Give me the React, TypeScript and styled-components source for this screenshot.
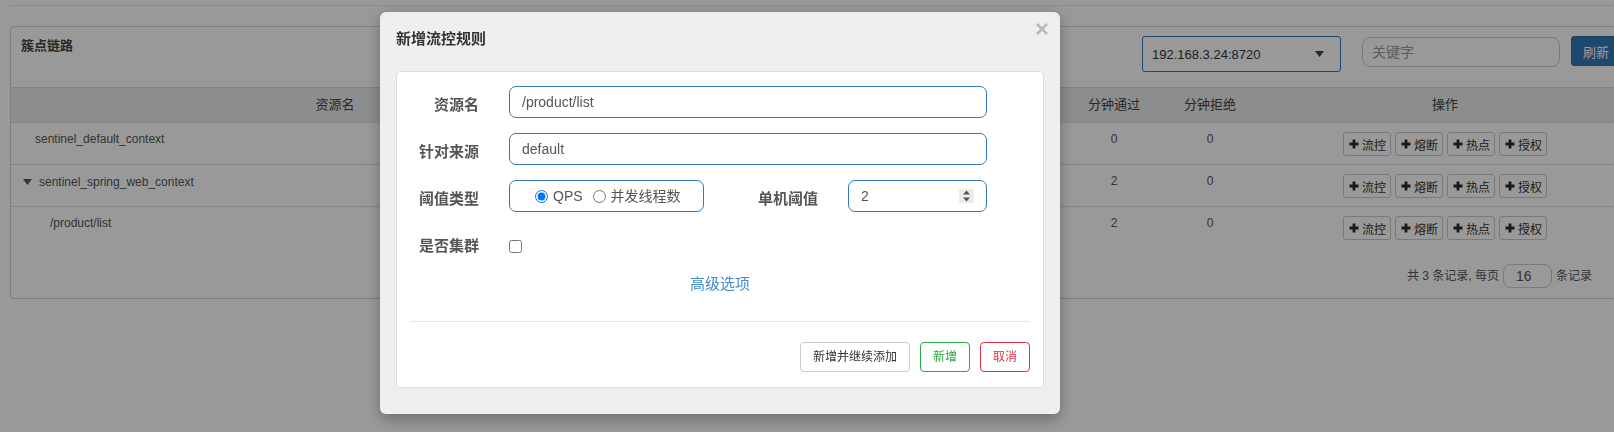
import React from "react";
import styled, { createGlobalStyle } from "styled-components";

const FONT = `"Liberation Sans", "Noto Sans CJK SC", Arial, sans-serif`;

const GlobalStyle = createGlobalStyle`
  html, body { margin: 0; padding: 0; background: #fff; overflow: hidden; }
  body { font-family: ${FONT}; color: #555; font-size: 12px; }
  * { box-sizing: border-box; }
  input[type=number]::-webkit-inner-spin-button,
  input[type=number]::-webkit-outer-spin-button { -webkit-appearance: none; margin: 0; }
`;

const Page = styled.div`
  width: 1614px;
  height: 432px;
  overflow: hidden;
`;

const TopRule = styled.div`
  margin-left: 10px;
  height: 6px;
  border-bottom: 1px solid #e4e4e4;
`;

const Panel = styled.section`
  margin: 20px 0 0 10px;
  width: 1622px;
  border: 1px solid #d4d4d4;
  border-radius: 4px;
  background: #fff;
`;

const PanelHeading = styled.div`
  display: flex;
  align-items: flex-start;
  padding: 9px 10px 15px;
  border-bottom: 1px solid #dadada;
`;

const PanelTitle = styled.h3`
  flex: 1;
  margin: 1px 0 0;
  font-size: 13px;
  line-height: 18px;
  font-weight: bold;
  color: #444;
`;

const MachineSelect = styled.div`
  width: 199px;
  height: 36px;
  margin-right: 21px;
  border: 1px solid #337ab7;
  border-radius: 3px;
  padding: 0 16px 0 9px;
  display: flex;
  align-items: center;
  justify-content: space-between;
  font-size: 13px;
  color: #333;
`;

const KeywordInput = styled.input`
  width: 198px;
  height: 30px;
  margin: 1px 11px 0 0;
  border: 1px solid #ccc;
  border-radius: 8px;
  padding: 0 9px;
  font-family: ${FONT};
  font-size: 14px;
  color: #555;
  outline: none;
  &::placeholder { color: #999; }
`;

const RefreshButton = styled.button`
  width: 50px;
  height: 30px;
  flex-shrink: 0;
  border: 1px solid #2e6da4;
  border-radius: 3px;
  background: #337ab7;
  color: #fff;
  font-family: ${FONT};
  font-size: 13px;
  padding: 0;
`;

const Table = styled.table`
  width: 1620px;
  table-layout: fixed;
  border-collapse: collapse;
`;

const Th = styled.th`
  background: #eaebec;
  font-size: 13px;
  font-weight: normal;
  color: #444;
  padding: 8px 12px;
  line-height: 18px;
  text-align: center;
  border-bottom: 1px solid #dedede;
  white-space: nowrap;
  overflow: hidden;
`;

const Tr = styled.tr<{ $last?: boolean }>`
  border-bottom: ${(p) => (p.$last ? "none" : "1px solid #dedede")};
`;

const Td = styled.td`
  padding: 8px 12px;
  font-size: 12px;
  line-height: 17px;
  color: #555;
  vertical-align: top;
  text-align: center;
`;

const NameTd = styled(Td)<{ $indent: number }>`
  text-align: left;
  padding-left: ${(p) => p.$indent}px;
`;

const NameContent = styled.span`
  display: inline-flex;
  align-items: center;
  gap: 7px;
`;

const OpsTd = styled(Td)`
  padding: 9px 12px 8px;
`;

const OpsGroup = styled.div`
  display: inline-flex;
  gap: 4px;
`;

const OpButton = styled.button`
  height: 24px;
  width: 48px;
  border: 1px solid #ccc;
  border-radius: 3px;
  background: #fff;
  padding: 0 0 0 5px;
  display: inline-flex;
  align-items: center;
  gap: 3px;
  font-family: ${FONT};
  font-size: 12px;
  color: #333;
`;

const Pagination = styled.div`
  display: flex;
  justify-content: flex-end;
  align-items: center;
  gap: 4px;
  padding: 16px 39px 10px 0;
  font-size: 12px;
  line-height: 17px;
  color: #555;
`;

const PageSizeInput = styled.input`
  width: 49px;
  height: 24px;
  border: 1px solid #ccc;
  border-radius: 8px;
  padding: 0 12px;
  font-family: ${FONT};
  font-size: 14px;
  color: #555;
  outline: none;
`;

/* ---------- Modal ---------- */

const Backdrop = styled.div`
  position: fixed;
  inset: 0;
  background: rgba(0, 0, 0, 0.4);
`;

const Dialog = styled.div`
  position: relative;
  margin: 12px 0 0 380px;
  width: 680px;
  background: #efefef;
  border-radius: 6px;
  box-shadow: 0 5px 15px rgba(0, 0, 0, 0.3);
  padding: 0 16px 26px;
`;

const DialogHeader = styled.div`
  padding: 17px 0 22px;
`;

const DialogTitle = styled.h4`
  margin: 0;
  font-size: 15px;
  line-height: 20px;
  font-weight: bold;
  color: #333;
`;

const CloseButton = styled.button`
  position: absolute;
  top: 11px;
  right: 12px;
  width: 12px;
  height: 12px;
  padding: 0;
  border: none;
  background: transparent;
  display: flex;
`;

const Card = styled.div`
  background: #fff;
  border: 1px solid #ddd;
  border-radius: 4px;
  padding: 14px 0 15px;
`;

const FormRow = styled.div<{ $top: number; $center?: boolean }>`
  display: flex;
  align-items: ${(p) => (p.$center ? "center" : "flex-start")};
  margin-top: ${(p) => p.$top}px;
`;

const Label = styled.label<{ $width: number; $pad?: number }>`
  width: ${(p) => p.$width}px;
  flex-shrink: 0;
  margin-right: 30px;
  padding-top: ${(p) => p.$pad ?? 9}px;
  text-align: right;
  font-size: 15px;
  line-height: 20px;
  font-weight: bold;
  color: #555;
`;

const TextInput = styled.input`
  width: 478px;
  height: 32px;
  border: 1px solid #337ab7;
  border-radius: 7px;
  padding: 0 12px;
  font-family: ${FONT};
  font-size: 14px;
  color: #555;
  outline: none;
`;

const RadioBox = styled.div`
  width: 195px;
  height: 32px;
  border: 1px solid #337ab7;
  border-radius: 7px;
  padding-left: 25px;
  display: flex;
  align-items: center;
  font-size: 14px;
  color: #555;
`;

const RadioOption = styled.label<{ $gap?: number }>`
  display: inline-flex;
  align-items: center;
  gap: 5px;
  margin-right: ${(p) => p.$gap ?? 0}px;
  line-height: 18px;
  input { margin: 0; width: 13px; height: 13px; }
`;

const NumberBox = styled.div`
  width: 139px;
  height: 32px;
  border: 1px solid #337ab7;
  border-radius: 7px;
  padding: 0 12px;
  display: flex;
  align-items: center;
`;

const NumberInput = styled.input`
  flex: 1;
  min-width: 0;
  border: none;
  outline: none;
  padding: 0;
  background: transparent;
  font-family: ${FONT};
  font-size: 14px;
  color: #555;
`;

const Spinner = styled.span`
  width: 15px;
  height: 14px;
  background: #ececec;
  display: flex;
  align-items: center;
  justify-content: center;
`;

const CheckBox = styled.input`
  margin: 0;
  width: 13px;
  height: 13px;
`;

const AdvancedLink = styled.a`
  display: block;
  margin-top: 18px;
  text-align: center;
  font-size: 15px;
  line-height: 20px;
  color: #428bca;
  text-decoration: none;
`;

const Divider = styled.div`
  height: 1px;
  background: #e5e5e5;
  margin: 27px 13px 0;
`;

const Footer = styled.div`
  display: flex;
  justify-content: flex-end;
  gap: 10px;
  margin-top: 20px;
  padding-right: 13px;
`;

const FooterButton = styled.button<{ $tone: string }>`
  height: 30px;
  padding: 0 12px;
  border: 1px solid ${(p) => (p.$tone === "default" ? "#ccc" : p.$tone)};
  border-radius: 4px;
  background: #fff;
  color: ${(p) => (p.$tone === "default" ? "#333" : p.$tone)};
  font-family: ${FONT};
  font-size: 12px;
  line-height: 18px;
`;

/* ---------- icons ---------- */

const PlusIcon = () => (
  <svg width="10" height="10" viewBox="0 0 10 10">
    <path d="M5 0.5v9M0.5 5h9" stroke="#2a2a2a" strokeWidth="2.8" />
  </svg>
);

const CaretDown = ({ color = "#555" }: { color?: string }) => (
  <svg width="9" height="6" viewBox="0 0 9 6">
    <polygon points="0,0 9,0 4.5,6" fill={color} />
  </svg>
);

const CloseIcon = () => (
  <svg width="12" height="12" viewBox="0 0 12 12">
    <path d="M1 1L11 11M11 1L1 11" stroke="#b9b9b9" strokeWidth="2.6" />
  </svg>
);

const SpinIcon = () => (
  <svg width="9" height="12" viewBox="0 0 9 12">
    <polygon points="4.5,0.5 8,4.5 1,4.5" fill="#555" />
    <polygon points="1,7.5 8,7.5 4.5,11.5" fill="#555" />
  </svg>
);

/* ---------- data ---------- */

const headers = ["资源名", "通过QPS", "拒绝QPS", "并发数", "平均RT", "分钟通过", "分钟拒绝", "操作"];
const colWidths = [648, 102, 102, 102, 102, 94, 98, 372];

type Row = { name: string; indent: number; toggle?: boolean; values: string[] };
const rows: Row[] = [
  { name: "sentinel_default_context", indent: 24, values: ["0", "0", "0", "0", "0", "0"] },
  { name: "sentinel_spring_web_context", indent: 12, toggle: true, values: ["0", "0", "0", "0", "2", "0"] },
  { name: "/product/list", indent: 39, values: ["0", "0", "0", "0", "2", "0"] },
];
const ops = ["流控", "熔断", "热点", "授权"];

export default function App() {
  return (
    <Page>
      <GlobalStyle />
      <TopRule />
      <Panel>
        <PanelHeading>
          <PanelTitle>簇点链路</PanelTitle>
          <MachineSelect>
            <span>192.168.3.24:8720</span>
            <CaretDown color="#444" />
          </MachineSelect>
          <KeywordInput placeholder="关键字" />
          <RefreshButton>刷新</RefreshButton>
        </PanelHeading>
        <Table>
          <colgroup>
            {colWidths.map((w, i) => (
              <col key={i} style={{ width: w }} />
            ))}
          </colgroup>
          <thead>
            <tr>
              {headers.map((h) => (
                <Th key={h}>{h}</Th>
              ))}
            </tr>
          </thead>
          <tbody>
            {rows.map((r, i) => (
              <Tr key={r.name} $last={i === rows.length - 1}>
                <NameTd $indent={r.indent}>
                  <NameContent>
                    {r.toggle && <CaretDown />}
                    {r.name}
                  </NameContent>
                </NameTd>
                {r.values.map((v, j) => (
                  <Td key={j}>{v}</Td>
                ))}
                <OpsTd>
                  <OpsGroup>
                    {ops.map((o) => (
                      <OpButton key={o}>
                        <PlusIcon />
                        {o}
                      </OpButton>
                    ))}
                  </OpsGroup>
                </OpsTd>
              </Tr>
            ))}
          </tbody>
        </Table>
        <Pagination>
          <span>共 3 条记录, 每页</span>
          <PageSizeInput defaultValue="16" />
          <span>条记录</span>
        </Pagination>
      </Panel>

      <Backdrop>
        <Dialog>
          <DialogHeader>
            <DialogTitle>新增流控规则</DialogTitle>
          </DialogHeader>
          <CloseButton aria-label="close">
            <CloseIcon />
          </CloseButton>
          <Card>
            <FormRow $top={0}>
              <Label $width={82}>资源名</Label>
              <TextInput defaultValue="/product/list" />
            </FormRow>
            <FormRow $top={15}>
              <Label $width={82}>针对来源</Label>
              <TextInput defaultValue="default" />
            </FormRow>
            <FormRow $top={15}>
              <Label $width={82}>阈值类型</Label>
              <RadioBox>
                <RadioOption $gap={10}>
                  <input type="radio" name="grade" defaultChecked />
                  QPS
                </RadioOption>
                <RadioOption>
                  <input type="radio" name="grade" />
                  并发线程数
                </RadioOption>
              </RadioBox>
              <Label $width={114}>单机阈值</Label>
              <NumberBox>
                <NumberInput type="number" defaultValue={2} />
                <Spinner>
                  <SpinIcon />
                </Spinner>
              </NumberBox>
            </FormRow>
            <FormRow $top={24} $center>
              <Label $width={82} $pad={0}>是否集群</Label>
              <CheckBox type="checkbox" />
            </FormRow>
            <AdvancedLink>高级选项</AdvancedLink>
            <Divider />
            <Footer>
              <FooterButton $tone="default">新增并继续添加</FooterButton>
              <FooterButton $tone="#28a745">新增</FooterButton>
              <FooterButton $tone="#dc3545">取消</FooterButton>
            </Footer>
          </Card>
        </Dialog>
      </Backdrop>
    </Page>
  );
}
